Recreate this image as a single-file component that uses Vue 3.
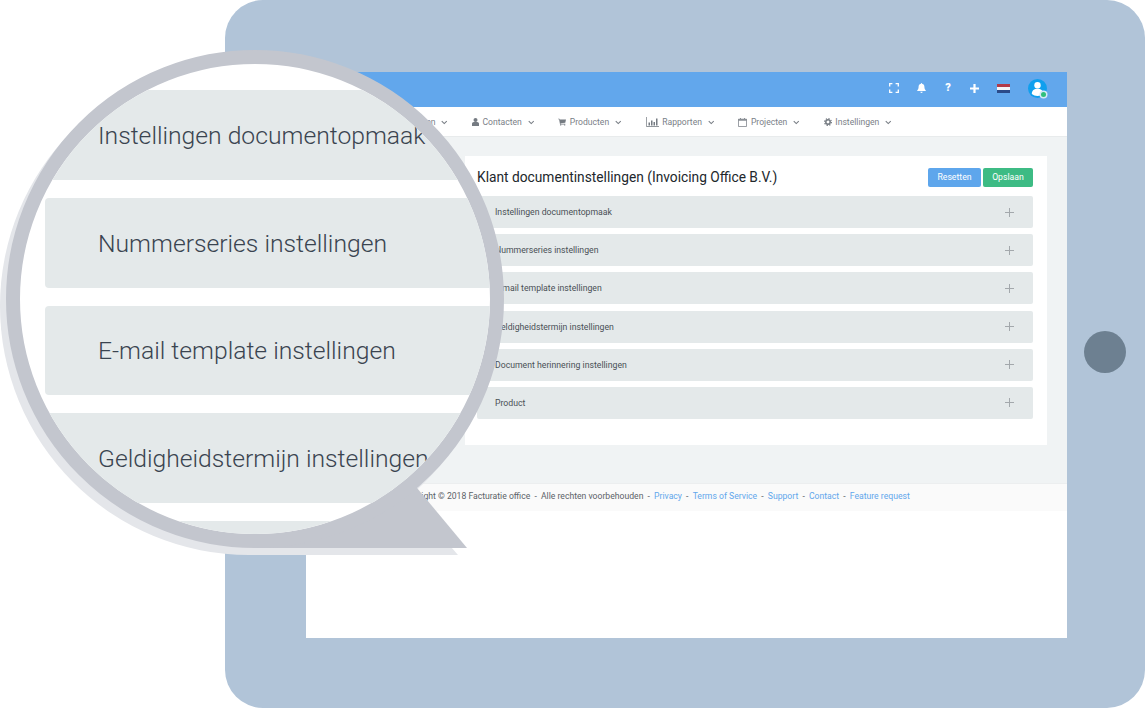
<script setup>
const navItems = [
  { label: 'Facturen', icon: 'file' },
  { label: 'Contacten', icon: 'user' },
  { label: 'Producten', icon: 'cart' },
  { label: 'Rapporten', icon: 'chart' },
  { label: 'Projecten', icon: 'cal' },
  { label: 'Instellingen', icon: 'gear' }
]
const rows = [
  'Instellingen documentopmaak',
  'Nummerseries instellingen',
  'E-mail template instellingen',
  'Geldigheidstermijn instellingen',
  'Document herinnering instellingen',
  'Product'
]
const zoomRows = rows.slice(0, 4).concat('')
const links = ['Privacy', 'Terms of Service', 'Support', 'Contact', 'Feature request']
</script>

<template>
  <div class="page">
    <div class="tablet">
      <div class="screen">
        <header class="topbar">
          <svg class="ic fs" width="10" height="10" viewBox="0 0 10 10"><path d="M.7 3.400V.7h2.700M6.600.7h2.700v2.700M9.300 6.600v2.700H6.600M3.400 9.300H.7V6.600" fill="none" stroke="#fff" stroke-width="1.300"/></svg>
          <svg class="ic bell" width="9" height="10" viewBox="0 0 9 10"><path d="M4.500 0c.4 0 .6.3.6.7C6.700 1 7.400 2.200 7.400 3.800c0 2 .6 3 1.400 3.700v.6H.2v-.6C1 6.800 1.600 5.800 1.600 3.800 1.600 2.200 2.300 1 3.900.7c0-.4.200-.7.600-.7zM3.300 8.700h2.400c0 .7-.5 1.200-1.200 1.200s-1.200-.5-1.200-1.200z" fill="#fff"/></svg>
          <span class="ic help">?</span>
          <svg class="ic plus" width="9" height="9" viewBox="0 0 9 9"><path d="M3.400 0h2.200v3.400H9v2.200H5.600V9H3.400V5.600H0V3.400h3.400z" fill="#fff"/></svg>
          <span class="flag"><i class="red"></i><i class="wht"></i><i class="blu"></i></span>
          <span class="avatar">
            <svg width="19" height="19" viewBox="0 0 19 19"><circle cx="9.500" cy="9.500" r="9.500" fill="#0f9fee"/><circle cx="9.500" cy="6.200" r="3.200" fill="#fff"/><path d="M3.800 15c0-3.400 2.400-5.200 5.700-5.200s5.700 1.800 5.700 5.200c-1.600 1.300-3.500 2-5.700 2s-4.100-.7-5.700-2z" fill="#fff"/></svg>
            <span class="dot"></span>
          </span>
        </header>

        <nav class="nav">
          <span v-for="item in navItems" :key="item.label" class="nav-item">
            <svg v-if="item.icon === 'file'" width="7" height="8" viewBox="0 0 7 8"><path d="M0 0h4.500L7 2.500V8H0z" fill="#757b82"/></svg>
            <svg v-else-if="item.icon === 'user'" width="7" height="8" viewBox="0 0 7 8"><circle cx="3.500" cy="2" r="2" fill="#757b82"/><path d="M0 8V6c0-1.200.9-1.900 1.800-1.900h3.400C6.100 4.100 7 4.800 7 6v2z" fill="#757b82"/></svg>
            <svg v-else-if="item.icon === 'cart'" width="8" height="8" viewBox="0 0 9 8"><path d="M0 .3h1.700l.3 1H9L8.200 4.800 2.800 5.400l.1.6h5.300v.7H2.300L1.200 1H0z" fill="#757b82"/><circle cx="3" cy="7.300" r=".7" fill="#757b82"/><circle cx="7.500" cy="7.300" r=".7" fill="#757b82"/></svg>
            <svg v-else-if="item.icon === 'chart'" width="13" height="10" viewBox="0 0 13 10"><path d="M.4 0v9.500H13" fill="none" stroke="#757b82" stroke-width=".8"/><path d="M2.500 5.500h1.500v3H2.500zM5 3.500h1.500v5H5zM7.500 5h1.500v3.500H7.500zM10 1.500h1.500v7H10z" fill="#757b82"/></svg>
            <svg v-else-if="item.icon === 'cal'" width="9" height="9" viewBox="0 0 9 9"><path d="M.45 1.200h8.100v7.350H.45z" fill="none" stroke="#8b9096" stroke-width=".9"/><path d="M0 1h9v1.800H0zM2 0h1v1.500H2zM6 0h1v1.500H6z" fill="#8b9096"/></svg>
            <svg v-else width="8" height="8" viewBox="0 0 8 8"><circle cx="4" cy="4" r="2.200" fill="none" stroke="#757b82" stroke-width="1.500"/><circle cx="4" cy="4" r="3.400" fill="none" stroke="#757b82" stroke-width="1.200" stroke-dasharray="1.300 1.370"/></svg>
            <span class="nav-label">{{ item.label }}</span>
            <svg class="chev" width="6.500" height="5" viewBox="0 0 7 5"><path d="M.8 1l2.700 2.700L6.200 1" fill="none" stroke="#757b82" stroke-width="1.100"/></svg>
          </span>
        </nav>

        <main class="content">
          <section class="card">
            <div class="card-head">
              <h1>Klant documentinstellingen (Invoicing Office B.V.)</h1>
              <div class="btns">
                <button class="btn blue">Resetten</button>
                <button class="btn green">Opslaan</button>
              </div>
            </div>
            <div class="rows">
              <div v-for="r in rows" :key="r" class="row">
                <span>{{ r }}</span>
                <svg width="9" height="9" viewBox="0 0 9 9"><path d="M4.500 0v9M0 4.500h9" stroke="#a3a8ac" stroke-width="1"/></svg>
              </div>
            </div>
          </section>
        </main>

        <footer class="footer">
          <span>Copyright © 2018 Facturatie office</span>
          <span class="sep">-</span>
          <span>Alle rechten voorbehouden</span>
          <template v-for="l in links" :key="l">
            <span class="sep">-</span>
            <a>{{ l }}</a>
          </template>
        </footer>
      </div>
      <div class="home"></div>
    </div>

    <div class="magnifier">
      <div class="disc shade"></div>
      <svg class="tail" width="480" height="520" viewBox="0 0 480 520">
        <path d="M248 505H458L400 438H248z" fill="#e4e6ea"/>
        <path d="M254 498H467L417 438H254z" fill="#c3c6ce"/>
      </svg>
      <div class="disc lens">
        <div class="zoom-rows">
          <div v-for="(r, i) in zoomRows" :key="i" class="zoom-row">{{ r }}</div>
        </div>
      </div>
    </div>
  </div>
</template>

<style>
html, body { margin: 0; background: #fff; overflow: hidden; }
</style>

<style scoped>
.page {
  position: relative;
  width: 1145px;
  height: 708px;
  overflow: hidden;
  background: #fff;
  font-family: Roboto, "Liberation Sans", sans-serif;
}
.tablet {
  position: relative;
  box-sizing: border-box;
  margin-left: 225px;
  width: 920px;
  height: 708px;
  padding: 72px 78px 70px 81px;
  background: #b1c4d8;
  border-radius: 38px;
}
.screen {
  display: flex;
  flex-direction: column;
  height: 566px;
  background: #fff;
}
.topbar {
  display: flex;
  align-items: center;
  justify-content: flex-end;
  flex: none;
  box-sizing: border-box;
  height: 35px;
  padding: 0 20px 3px 0;
  background: #62a7ec;
}
.ic { flex: none; }
.bell { margin-left: 18px; }
.help {
  width: 8px;
  margin-left: 18px;
  color: #fff;
  font-size: 11px;
  font-weight: 900;
  line-height: 10px;
  text-align: center;
}
.plus { margin-left: 18px; }
.flag {
  display: flex;
  flex-direction: column;
  width: 13px;
  height: 9px;
  margin-left: 18px;
}
.flag i { flex: 1; }
.red { background: #b23a48; }
.wht { background: #f4f4f6; }
.blu { background: #2b4a88; }
.avatar {
  position: relative;
  display: flex;
  margin-left: 18px;
}
.dot {
  position: absolute;
  right: 1px;
  bottom: 1px;
  width: 5px;
  height: 5px;
  border-radius: 50%;
  background: #2fbf7c;
  box-shadow: 0 0 0 1.500px #d3e9f8;
}
.nav {
  display: flex;
  align-items: center;
  flex: none;
  gap: 24px;
  box-sizing: border-box;
  height: 30px;
  padding: 1px 0 0 85.500px;
  background: #fff;
  border-bottom: 1px solid #e8ebec;
}
.nav-item {
  display: flex;
  align-items: center;
  color: #7a8087;
  font-size: 8.600px;
  white-space: nowrap;
}
.nav-label { margin: 0 6px 0 3.500px; }
.content {
  flex: none;
  box-sizing: border-box;
  height: 346px;
  padding: 19px 20px 0 159px;
  background: #f0f3f4;
}
.card {
  box-sizing: border-box;
  height: 289px;
  padding: 0 14px 0 12px;
  background: #fff;
}
.card-head {
  display: flex;
  align-items: center;
  justify-content: space-between;
  height: 40px;
  padding-top: 2px;
  box-sizing: border-box;
}
h1 {
  margin: 0 0 1px;
  color: #22272c;
  font-size: 13.750px;
  font-weight: 400;
  white-space: nowrap;
}
.btns { display: flex; gap: 2px; }
.btn {
  height: 19px;
  padding: 0;
  border: 0;
  border-radius: 2px;
  color: #fff;
  font-family: inherit;
  font-size: 8.700px;
}
.blue { width: 53px; background: #5ea6ec; }
.green { width: 50px; background: #3dbb84; }
.rows {
  display: flex;
  flex-direction: column;
  gap: 6.200px;
}
.row {
  display: flex;
  align-items: center;
  justify-content: space-between;
  box-sizing: border-box;
  height: 32px;
  padding: 0 19px 0 18px;
  background: #e4e9ea;
  border-radius: 2px;
  color: #4a5056;
  font-size: 8.700px;
}
.footer {
  display: flex;
  align-items: center;
  flex: none;
  gap: 4px;
  box-sizing: border-box;
  height: 28px;
  padding: 0 0 4px 93px;
  background: #fafafa;
  border-top: 1px solid #eceeef;
  color: #5c6268;
  font-size: 8.650px;
  white-space: nowrap;
}
.sep { margin: 0 .15px; }
.footer a { color: #62a7ec; }
.home {
  position: absolute;
  top: 331px;
  left: 859px;
  width: 42px;
  height: 42px;
  border-radius: 50%;
  background: #6d8091;
}
.magnifier {
  position: absolute;
  top: 50px;
  left: 0;
  width: 510px;
  height: 510px;
}
.tail { position: absolute; top: 0; left: 0; }
.disc {
  position: absolute;
  box-sizing: border-box;
  width: 498px;
  height: 498px;
  border-radius: 50%;
}
.shade { top: 7px; left: 0; background: #e4e6ea; }
.lens {
  top: 0;
  left: 6px;
  overflow: hidden;
  border: 14px solid #c3c6ce;
  background: #fff;
}
.zoom-rows {
  display: flex;
  flex-direction: column;
  gap: 18px;
  padding: 26px 0 0 25px;
}
.zoom-row {
  flex: none;
  display: flex;
  align-items: center;
  box-sizing: border-box;
  width: 600px;
  height: 89.800px;
  padding: 1px 0 0 53px;
  background: #e4e9ea;
  border-radius: 4px;
  color: #3a4450;
  font-size: 24.700px;
  font-weight: 300;
  white-space: nowrap;
}
</style>
